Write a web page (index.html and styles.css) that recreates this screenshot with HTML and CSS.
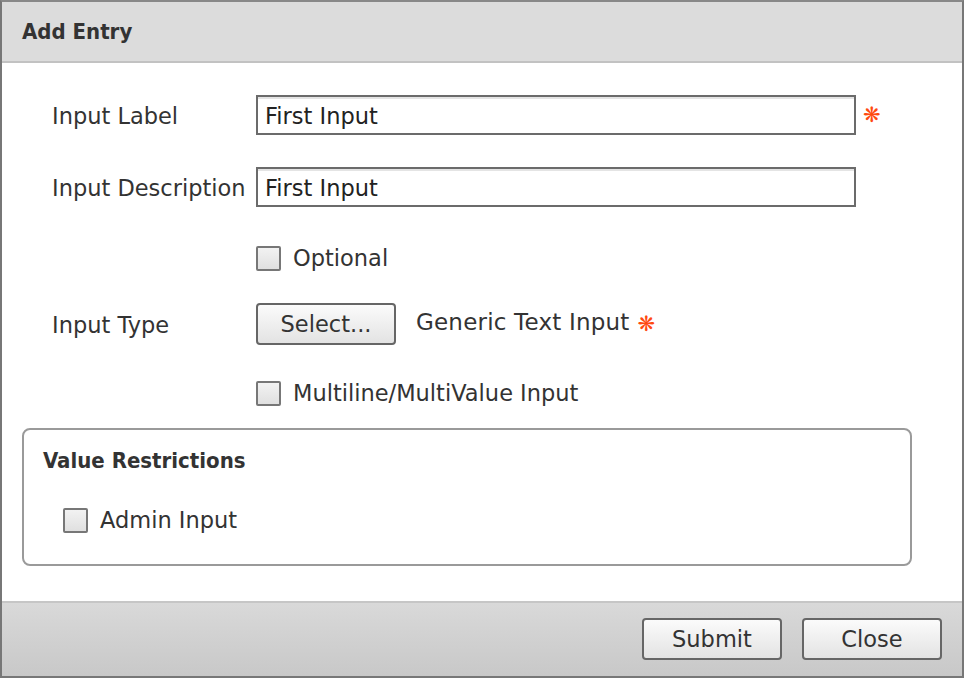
FILE: index.html
```html
<!DOCTYPE html>
<html>
<head>
<meta charset="utf-8">
<link rel="stylesheet" href="styles.css">
</head>
<body>
<div class="dialog">
  <div class="header">Add Entry</div>
  <div class="content">
    <div class="row row-input">
      <span class="label">Input Label</span>
      <div class="field">First Input</div>
      <span class="req">&#10059;</span>
    </div>
    <div class="row row-input row-desc">
      <span class="label">Input Description</span>
      <div class="field">First Input</div>
    </div>
    <div class="row row-check row-opt">
      <span class="label"></span>
      <span class="box"></span><span class="ctext">Optional</span>
    </div>
    <div class="row row-type">
      <span class="label">Input Type</span>
      <button class="btn btn-select">Select...</button>
      <span class="type-text">Generic Text Input</span>
      <span class="req req-small">&#10059;</span>
    </div>
    <div class="row row-check row-multi">
      <span class="label"></span>
      <span class="box"></span><span class="ctext">Multiline/MultiValue Input</span>
    </div>
    <div class="fieldset">
      <div class="legend">Value Restrictions</div>
      <div class="admin">
        <span class="box"></span><span class="ctext">Admin Input</span>
      </div>
    </div>
  </div>
  <div class="footer">
    <button class="btn btn-foot">Submit</button>
    <button class="btn btn-foot">Close</button>
  </div>
</div>
</body>
</html>
```

FILE: styles.css
```css
* { box-sizing: border-box; }
html, body { margin: 0; padding: 0; }
body {
  width: 964px;
  height: 678px;
  background: #fff;
  font-family: "DejaVu Sans", Verdana, sans-serif;
  color: #333;
}
.dialog {
  width: 964px;
  height: 678px;
  border: 2px solid #777;
  border-top-color: #888;
  display: flex;
  flex-direction: column;
  background: #fff;
}
.header {
  height: 61px;
  background: #dcdcdc;
  border-bottom: 2px solid #c2c2c2;
  font-family: "DejaVu Sans Condensed", "DejaVu Sans", sans-serif;
  font-stretch: condensed;
  font-weight: bold;
  font-size: 22px;
  color: #333;
  padding: 17px 0 0 20px;
  flex: none;
}
.content {
  flex: 1;
  padding: 32px 0 0 20px;
}
.row {
  display: flex;
  align-items: center;
}
.label {
  width: 234px;
  padding-left: 30px;
  font-size: 22.5px;
  color: #333;
  flex: none;
  margin-top: 2px;
}
.field {
  width: 600px;
  height: 40px;
  border: 2px solid #6b6b6b;
  box-shadow: inset 0 2px 0 #e4e4e4;
  font-size: 22.5px;
  color: #222;
  padding: 6px 0 0 7px;
}
.req {
  color: #ff4a10;
  font-size: 21px;
  margin-left: 7px;
  font-weight: bold;
}
.req-small { margin-left: 8px; }
.row-desc { margin-top: 32px; }
.row-opt { margin-top: 38px; }
.box {
  width: 25px;
  height: 25px;
  border: 2px solid #777;
  border-radius: 2px;
  background: linear-gradient(#f2f2f2, #e0e0e0);
  display: inline-block;
  flex: none;
}
.ctext {
  font-size: 22.5px;
  color: #333;
  margin-left: 12px;
}
.row-type { margin-top: 32px; }
.btn {
  font-family: "DejaVu Sans", Verdana, sans-serif;
  font-size: 22.5px;
  color: #333;
  width: 140px;
  height: 42px;
  border: 2px solid #666;
  border-radius: 4px;
  background: linear-gradient(#fbfbfb, #e3e3e3);
  padding: 0;
}
.type-text {
  font-size: 23px;
  color: #333;
  margin-left: 20px;
  margin-top: -4px;
  letter-spacing: 0.2px;
}
.row-multi { margin-top: 35px; }
.fieldset {
  margin-top: 22px;
  margin-left: 0;
  width: 890px;
  height: 138px;
  border: 2px solid #9a9a9a;
  border-radius: 8px;
  padding: 18px 0 0 19px;
}
.legend {
  font-family: "DejaVu Sans Condensed", "DejaVu Sans", sans-serif;
  font-stretch: condensed;
  font-weight: bold;
  font-size: 22px;
  color: #333;
}
.admin {
  display: flex;
  align-items: center;
  margin-top: 34px;
  margin-left: 20px;
}
.footer {
  height: 75px;
  flex: none;
  border-top: 2px solid #c6c6c6;
  background: linear-gradient(#d9d9d9, #c8c8c8);
  display: flex;
  justify-content: flex-end;
  align-items: flex-start;
  gap: 20px;
  padding: 15px 20px 0 0;
}
```
